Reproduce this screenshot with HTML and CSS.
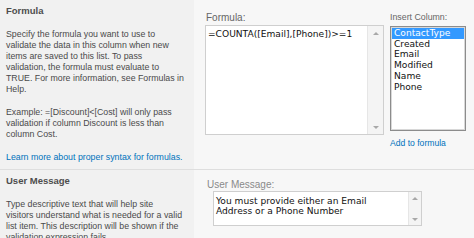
FILE: index.html
```html
<!DOCTYPE html>
<html>
<head>
<meta charset="utf-8">
<link rel="stylesheet" href="styles.css">
</head>
<body>
<div class="page">
  <section class="row row-formula">
    <div class="desc">
      <h3 class="title">Formula</h3>
      <p class="text">Specify the formula you want to use to<br>validate the data in this column when new<br>items are saved to this list. To pass<br>validation, the formula must evaluate to<br>TRUE. For more information, see Formulas in<br>Help.</p>
      <p class="text">Example: =[Discount]&lt;[Cost] will only pass<br>validation if column Discount is less than<br>column Cost.</p>
      <p class="text"><a class="link" href="#">Learn more about proper syntax for formulas.</a></p>
    </div>
    <div class="field field-formula">
      <div class="formula-group">
        <div class="label">Formula:</div>
        <div class="textbox formula-box">
          <div class="textbox-content">=COUNTA([Email],[Phone])&gt;=1</div>
          <div class="scrollbar"><span class="arrow up"></span><span class="arrow down"></span></div>
        </div>
      </div>
      <div class="insert-group">
        <div class="label label-insert">Insert Column:</div>
        <ul class="listbox">
          <li class="item selected">ContactType</li>
          <li class="item">Created</li>
          <li class="item">Email</li>
          <li class="item">Modified</li>
          <li class="item">Name</li>
          <li class="item">Phone</li>
        </ul>
        <a class="link add-link" href="#">Add to formula</a>
      </div>
    </div>
  </section>
  <section class="row row-message">
    <div class="desc">
      <h3 class="title">User Message</h3>
      <p class="text">Type descriptive text that will help site<br>visitors understand what is needed for a valid<br>list item. This description will be shown if the<br>validation expression fails.</p>
    </div>
    <div class="field field-message">
      <div class="label label-light">User Message:</div>
      <div class="textbox message-box">
        <div class="textbox-content">You must provide either an Email<br>Address or a Phone Number</div>
        <div class="scrollbar"><span class="arrow up"></span><span class="arrow down"></span></div>
      </div>
    </div>
  </section>
</div>
</body>
</html>
```
FILE: styles.css
```css
* { box-sizing: border-box; }
html, body { margin: 0; padding: 0; }
body {
  background: #f7f7f7;
  font-family: "Liberation Sans", Arial, sans-serif;
  width: 474px;
  height: 238px;
  overflow: hidden;
}
.page { display: flex; flex-direction: column; }
.row {
  display: grid;
  grid-template-columns: 194px 1fr;
}
.row-formula {
  height: 170px;
  border-bottom: 1px solid #dedede;
}
.row-message {
  height: 68px;
}
.desc {
  background: #f1f1f1;
  padding: 4px 4px 0 6px;
  white-space: nowrap;
}
.title {
  margin: 0;
  font-size: 9.5px;
  line-height: 13px;
  font-weight: bold;
  color: #4d4d4d;
}
.text {
  margin: 12px 0 0 0;
  font-size: 8.8px;
  line-height: 11px;
  color: #4a4a4a;
}
.link {
  color: #0072bc;
  text-decoration: none;
}
.field-formula {
  display: flex;
  gap: 6px;
  padding-left: 11px;
}
.formula-group { width: 179px; padding-top: 12px; }
.label {
  font-size: 10px;
  line-height: 12px;
  color: #666;
  padding-left: 1px;
}
.textbox {
  display: flex;
  background: #fff;
  border: 1px solid #cfcfcf;
}
.textbox-content {
  flex: 1;
  font-family: "DejaVu Sans", Verdana, sans-serif;
  font-size: 9.1px;
  line-height: 11px;
  color: #111;
  padding: 3px 2px;
  white-space: nowrap;
}
.formula-box { height: 110px; margin-top: 1px; }
.scrollbar {
  width: 16px;
  background: #f4f4f4;
  border-left: 1px solid #e6e6e6;
  display: flex;
  flex-direction: column;
  justify-content: space-between;
  align-items: center;
  padding: 6px 0 5px;
}
.arrow {
  width: 0;
  height: 0;
  border-left: 3px solid transparent;
  border-right: 3px solid transparent;
}
.arrow.up { border-bottom: 3px solid #a8a8a8; }
.arrow.down { border-top: 3px solid #a8a8a8; }
.insert-group {
  width: 76px;
  padding-top: 11px;
  display: flex;
  flex-direction: column;
}
.label-insert { color: #666; padding-left: 0; font-size: 8.8px; }
.listbox {
  list-style: none;
  margin: 3px 0 0 0;
  padding: 1px;
  height: 105px;
  background: #fff;
  border: 1px solid #8c8c8c;
  box-shadow: inset 0 0 0 1px #d8d8d8;
}
.item {
  font-family: "DejaVu Sans", Verdana, sans-serif;
  font-size: 9.1px;
  line-height: 10.7px;
  color: #111;
  padding-left: 2px;
}
.item.selected { background: #3399ff; color: #fff; }
.add-link {
  font-size: 8.6px;
  line-height: 12px;
  margin-top: 6px;
}
.field-message {
  padding-left: 12px;
  padding-top: 9px;
}
.label-light { color: #8a8a8a; }
.message-box {
  margin-top: 0;
  margin-left: 7px;
  width: 209px;
  height: 35px;
}
.message-box .textbox-content { padding: 4px 2px; line-height: 10px; }
.message-box .scrollbar { width: 13px; padding: 5px 0 4px; }
```
